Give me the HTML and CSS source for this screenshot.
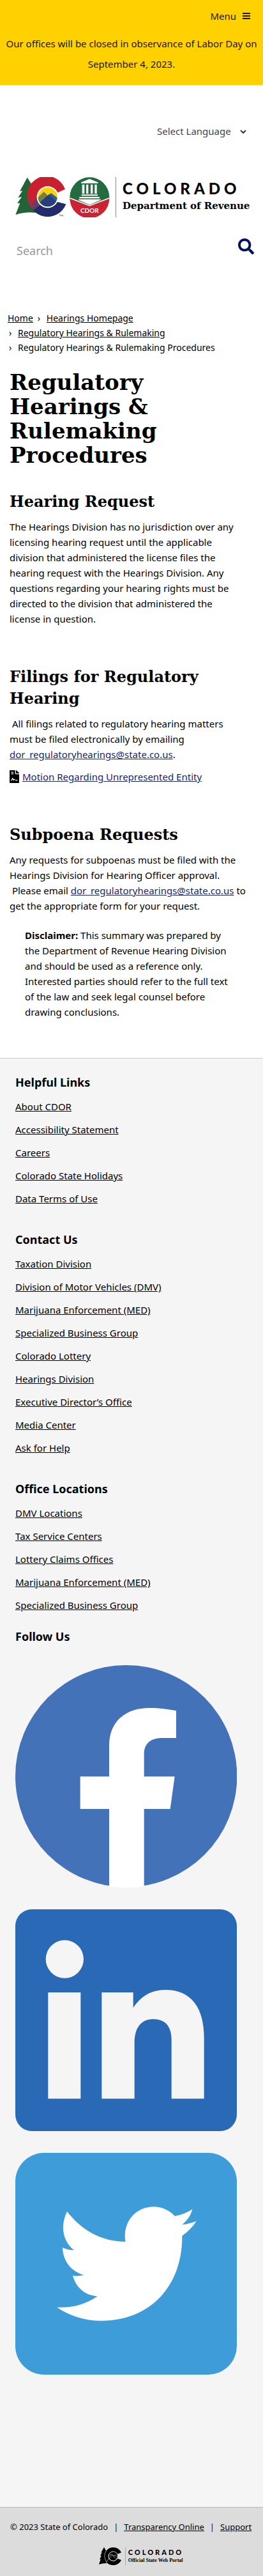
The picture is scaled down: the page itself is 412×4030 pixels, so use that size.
FILE: index.html
```html
<!DOCTYPE html>
<html lang="en">
<head>
<meta charset="utf-8">
<meta name="viewport" content="width=device-width, initial-scale=1">
<title>Regulatory Hearings &amp; Rulemaking Procedures</title>
<link rel="stylesheet" href="styles.css">
</head>
<body>
<div class="alert">
  <button class="menu" type="button">Menu
    <svg width="12" height="12" viewBox="0 0 12 12" aria-hidden="true"><path d="M0 2H12M0 6H12M0 10H12" stroke="currentColor" stroke-width="2"/></svg>
  </button>
  <p class="notice">Our offices will be closed in observance of Labor Day on September 4, 2023.</p>
</div>

<header class="header">
  <div class="language">
    <select class="language-select" aria-label="Select Language"><option>Select Language</option></select>
    <svg class="language-arrow" width="10" height="6" viewBox="0 0 10 6" aria-hidden="true"><path d="M1 1L5 5L9 1" fill="none" stroke="#333" stroke-width="2"/></svg>
  </div>

  <a class="brand" href="#" aria-label="Colorado Department of Revenue">
    <svg class="brand-mark" width="148" height="63" viewBox="74 111 444 189" aria-hidden="true">
      <path d="M130 113L152 147L144 149L166 184L158 187L196 284Q135 268 75 288L96 233L83 234L104 204L87 207L108 175L95 178Z" fill="#236338"/>
      <path d="M308 168A92 92 0 1 0 145 250L186 234A50 50 0 1 1 273 184Z" fill="#c9202f"/>
      <path d="M312 238A92 92 0 0 1 158 267L190 239A50 50 0 0 0 270 227Z" fill="#232b6b"/>
      <path d="M134 205Q140 238 158 267L190 239L178 205L157 235Z" fill="#6c3c64"/>
      <path d="M157 235L134 212Q138 240 150 257Z" fill="#a12e4b"/>
      <circle cx="226" cy="205" r="51" fill="#fff"/>
      <circle cx="226" cy="205" r="45" fill="#fed103"/>
      <path d="M181 207L208 181L226 199L242 186L271 208A45 45 0 0 1 182 214Z" fill="#345d91"/>
      <path d="M181 207L208 181L224 198L190 229Q181 219 181 207Z" fill="#788139"/>
      <path d="M190 230L232 192L266 226A45 45 0 0 1 190 230Z" fill="#27407b"/>
      <path d="M280 288H288M284 288V295M291 295V289L294 293L297 289V295" fill="none" stroke="#555" stroke-width="2"/>
      <circle cx="423" cy="205" r="93" fill="#246b40"/>
      <path d="M330 211L423 247L516 211A93 93 0 0 1 330 211Z" fill="#cd2233"/>
      <path d="M331 210L423 245L515 210" fill="none" stroke="#fff" stroke-width="5"/>
      <path d="M383 140V136L423 120L463 136V140ZM388 146H399V189H388ZM407 146H417V189H407ZM428 146H438V189H428ZM447 146H457V189H447ZM385 193H461V199H385ZM375 204H470V211H375ZM371 215H475V219L423 241L371 219Z" fill="#fff"/>
      <text x="423" y="280" class="brand-seal">CDOR</text>
    </svg>
    <span class="brand-text">
      <span class="brand-name">COLORADO</span>
      <span class="brand-dept">Department of Revenue</span>
    </span>
  </a>

  <form class="search">
    <input class="search-input" type="search" placeholder="Search" aria-label="Search">
    <button class="search-button" type="submit" aria-label="Submit search">
      <svg width="25" height="25" viewBox="0 0 512 512" aria-hidden="true"><path fill="#02135b" d="M505 442.700L405.300 343c-4.500-4.500-10.600-7-17-7H372c27.600-35.300 44-79.700 44-128C416 93.100 322.900 0 208 0S0 93.100 0 208s93.100 208 208 208c48.300 0 92.700-16.400 128-44v16.300c0 6.400 2.500 12.500 7 17l99.700 99.700c9.400 9.400 24.600 9.400 33.900 0l28.300-28.300c9.400-9.400 9.400-24.600.1-34zM208 336c-70.700 0-128-57.200-128-128 0-70.700 57.200-128 128-128 70.700 0 128 57.200 128 128 0 70.700-57.200 128-128 128z"/></svg>
    </button>
  </form>
</header>

<nav aria-label="Breadcrumb">
  <ol class="breadcrumb">
    <li><a href="#">Home</a></li>
    <li><a href="#">Hearings Homepage</a></li>
    <li><a href="#">Regulatory Hearings &amp; Rulemaking</a></li>
    <li>Regulatory Hearings &amp; Rulemaking Procedures</li>
  </ol>
</nav>

<main class="content">
  <h1>Regulatory Hearings &amp; Rulemaking Procedures</h1>

  <section class="narrow">
    <h2>Hearing Request</h2>
    <p>The Hearings Division has no jurisdiction over any licensing hearing request until the applicable division that administered the license files the hearing request with the Hearings Division. Any questions regarding your hearing rights must be directed to the division that administered the license in question.</p>
  </section>

  <section class="narrow">
    <h2>Filings for Regulatory Hearing</h2>
    <p>&nbsp;All filings related to regulatory hearing matters must be filed electronically by emailing <a href="#">dor_regulatoryhearings@state.co.us</a>.</p>
    <p class="document">
      <svg width="15" height="20" viewBox="0 0 384 512" aria-hidden="true"><path d="M224 136V0H24C10.700 0 0 10.700 0 24v464c0 13.300 10.700 24 24 24h336c13.300 0 24-10.700 24-24V160H248c-13.200 0-24-10.800-24-24zM64 72c0-4.420 3.580-8 8-8h80c4.420 0 8 3.580 8 8v16c0 4.420-3.580 8-8 8H72c-4.420 0-8-3.580-8-8V72zm0 64c0-4.420 3.580-8 8-8h80c4.420 0 8 3.580 8 8v16c0 4.420-3.580 8-8 8H72c-4.420 0-8-3.580-8-8v-16zm192.810 248H304c8.840 0 16 7.160 16 16s-7.160 16-16 16h-47.190c-16.450 0-31.800-9.140-39.140-23.880-4.890-9.760-15.480-11.020-18.480-11.020-3 0-13.660 1.260-18.560 11.040l-7.390 14.800c-2.890 5.780-8.840 9.190-15.170 8.790-6.450-.45-12-4.750-14.030-10.890L120.200 354.600l-10.610 31.880c-5.890 17.660-22.380 29.530-41 29.530H64c-8.840 0-16-7.160-16-16s7.160-16 16-16h4.590c4.830 0 9.110-3.080 10.640-7.660l18.190-54.640c3.300-9.810 12.440-16.410 22.780-16.410s19.480 6.590 22.770 16.410l13.880 41.640c19.770-16.190 54.050-9.700 66 14.160 2.020 4.040 5.940 6.500 10.970 6.500zM377 105L279.100 7c-4.500-4.500-10.600-7-17-7H256v128h128v-6.100c0-6.300-2.500-12.400-7-16.900z"/></svg>
      <a href="#">Motion Regarding Unrepresented Entity</a>
    </p>
  </section>

  <section>
    <h2>Subpoena Requests</h2>
    <p>Any requests for subpoenas must be filed with the Hearings Division for Hearing Officer approval. &nbsp;Please&nbsp;email <a href="#">dor_regulatoryhearings@state.co.us</a> to get the appropriate form for your request.</p>
    <blockquote class="disclaimer"><strong>Disclaimer:</strong> This summary was prepared by the Department of Revenue Hearing Division and should be used as a reference only. Interested parties should refer to the full text of the law and seek legal counsel before drawing conclusions.</blockquote>
  </section>
</main>

<footer>
  <div class="footer-main">
    <section class="footer-group">
      <h3>Helpful Links</h3>
      <ul>
        <li><a href="#">About CDOR</a></li>
        <li><a href="#">Accessibility Statement</a></li>
        <li><a href="#">Careers</a></li>
        <li><a href="#">Colorado State Holidays</a></li>
        <li><a href="#">Data Terms of Use</a></li>
      </ul>
    </section>
    <section class="footer-group">
      <h3>Contact Us</h3>
      <ul>
        <li><a href="#">Taxation Division</a></li>
        <li><a href="#">Division of Motor Vehicles (DMV)</a></li>
        <li><a href="#">Marijuana Enforcement (MED)</a></li>
        <li><a href="#">Specialized Business Group</a></li>
        <li><a href="#">Colorado Lottery</a></li>
        <li><a href="#">Hearings Division</a></li>
        <li><a href="#">Executive Director’s Office</a></li>
        <li><a href="#">Media Center</a></li>
        <li><a href="#">Ask for Help</a></li>
      </ul>
    </section>
    <section class="footer-group">
      <h3>Office Locations</h3>
      <ul>
        <li><a href="#">DMV Locations</a></li>
        <li><a href="#">Tax Service Centers</a></li>
        <li><a href="#">Lottery Claims Offices</a></li>
        <li><a href="#">Marijuana Enforcement (MED)</a></li>
        <li><a href="#">Specialized Business Group</a></li>
      </ul>
    </section>
    <section class="follow">
      <h3>Follow Us</h3>
      <div class="social">
        <a href="#" aria-label="Facebook">
          <svg viewBox="75 71 1041 1044" aria-hidden="true">
            <circle cx="596" cy="592" r="521" fill="#4472b9"/>
            <path d="M380 594H516V450C516 332 596 272 706 272C750 272 790 278 831 285V413H765C710 413 680 440 680 490V594H824L803 746H680V1108Q598 1123 516 1108V746H380Z" fill="#fff"/>
          </svg>
        </a>
        <a href="#" aria-label="LinkedIn">
          <svg viewBox="75 78 1041 1041" aria-hidden="true">
            <rect x="75" y="78" width="1041" height="1041" rx="78" fill="#2969b6"/>
            <g fill="#f5f5f5">
              <circle cx="307" cy="312" r="89"/>
              <path d="M229 468H382V967H229Z"/>
              <path d="M481 468H629V540Q685 456 780 456C905 456 962 545 962 680V967H809V690C809 625 778 593 723 593C665 593 635 635 635 705V967H481Z"/>
            </g>
          </svg>
        </a>
        <a href="#" aria-label="Twitter">
          <svg viewBox="76 55 1041 1041" aria-hidden="true">
            <rect x="76" y="55" width="1041" height="1041" rx="135" fill="#3e9cd8"/>
            <path d="M319 330C390 420 480 470 593 472C580 380 640 308 727 308C765 308 800 325 826 352C855 347 882 336 908 320C900 350 885 372 860 392C883 390 905 383 927 375C910 402 888 425 860 444C862 680 710 843 480 843C405 843 335 822 272 780C340 784 405 768 462 728C405 724 362 690 346 632C363 634 380 633 398 629C340 612 300 565 298 500C315 508 333 512 352 512C300 470 285 400 319 330Z" fill="#fff"/>
          </svg>
        </a>
      </div>
    </section>
  </div>

  <div class="footer-bar">
    <p class="legal"><span>© 2023 State of Colorado</span><span>|</span><a href="#">Transparency Online</a><span>|</span><a href="#">Support</a></p>
    <a class="portal" href="#" aria-label="Colorado Official State Web Portal">
      <svg width="36" height="28" viewBox="0 0 108 84" aria-hidden="true">
        <path d="M24 0L34 18L31 20L42 38L38 40L50 76Q25 72 0 80L8 56L3 56L12 40L6 41L14 24L10 25Z"/>
        <path d="M105 25A42 42 0 1 0 105 60L87 53A23 23 0 1 1 87 32Z"/>
        <circle cx="67" cy="42" r="21"/>
        <g fill="none" stroke="#dcdcdc" stroke-width="2">
          <circle cx="67" cy="42" r="22"/>
          <path d="M34 16Q16 44 40 76M32 72L62 36L86 58M48 40L59 32L68 42L75 36L88 46"/>
        </g>
      </svg>
      <span class="portal-text">
        <span class="portal-name">COLORADO</span>
        <span class="portal-sub">Official State Web Portal</span>
      </span>
    </a>
  </div>
</footer>
</body>
</html>
```

FILE: styles.css
```css
* { box-sizing: border-box; }

body {
  margin: 0;
  background: #fff;
  color: #000;
  font: 15px/24px "Noto Sans", "Open Sans", sans-serif;
}

h1, h2, h3, p, ul, ol { margin: 0; }
ul, ol { padding: 0; list-style: none; }
a { color: #000; }
svg { display: block; flex: none; }

.alert {
  padding: 13px 0 17px;
  background: #ffd100;
  color: #1c1400;
}
.menu {
  display: flex;
  align-items: center;
  gap: 10px;
  margin: 0 20px 15px auto;
  padding: 0;
  border: 0;
  background: none;
  color: inherit;
  font: inherit;
}
.notice { line-height: 32px; text-align: center; }

.header { padding: 60px 14px 0 24px; }
.language {
  position: relative;
  width: 140px;
  margin: 0 12px 0 auto;
}
.language-select {
  width: 100%;
  height: 24px;
  padding: 0;
  border: 0;
  appearance: none;
  background: none;
  color: #444;
  font: inherit;
}
.language-arrow {
  position: absolute;
  top: 10px;
  right: 0;
}

.brand {
  display: flex;
  gap: 9px;
  margin-top: 60px;
  text-decoration: none;
}
.brand-seal {
  fill: #fff;
  font: bold 30px Lato, sans-serif;
  text-anchor: middle;
}
.brand-text {
  display: flex;
  flex-direction: column;
  gap: 4px;
  padding: 5px 0 0 10px;
  border-left: 1px solid #888;
}
.brand-name {
  font: 900 24px/26px Lato, sans-serif;
  letter-spacing: 6px;
}
.brand-dept {
  font: bold 15px/20px "DejaVu Serif", serif;
  white-space: nowrap;
}

.search {
  display: flex;
  align-items: flex-start;
  margin-top: 33px;
}
.search-input {
  flex: 1;
  min-width: 0;
  height: 38px;
  padding: 0 2px;
  border: 0;
  background: none;
  font: inherit;
  font-size: 18px;
}
.search-input::placeholder { color: #999; }
.search-button {
  padding: 0;
  border: 0;
  background: none;
}

.breadcrumb {
  display: flex;
  flex-wrap: wrap;
  column-gap: 5px;
  padding: 75px 12px 0;
  font-size: 14px;
  line-height: 23px;
}
.breadcrumb li + li::before {
  content: "›";
  display: inline-block;
  width: 14px;
  padding-left: 2px;
}

.content { padding: 24px 15px 60px; }
h1 {
  font: bold 34px/38px "DejaVu Serif", serif;
}
h2 {
  margin: 62px 0 10px;
  font: bold 24px/34px "DejaVu Serif", serif;
}
h1 + section h2 { margin-top: 37px; }
.narrow { padding-right: 22px; }
.content a { color: #1a2470; }
.document {
  display: flex;
  align-items: center;
  gap: 5px;
  margin-top: 11px;
}
.disclaimer { margin: 22px 34px 0 24px; }

.footer-main {
  padding: 19px 41px 207px 24px;
  border-top: 1px solid #ccc;
  background: #f5f5f5;
}
.footer-group + .footer-group { margin-top: 28px; }
h3 {
  margin-bottom: 2px;
  font-size: 18px;
  line-height: 36px;
}
.footer-group li { line-height: 36px; }
.follow { margin-top: 13px; }
.social {
  display: flex;
  flex-direction: column;
  gap: 34px;
  margin-top: 27px;
}
.social svg { width: 100%; }

.footer-bar {
  padding: 18px 16px;
  border-top: 1px solid #bbb;
  background: #dcdcdc;
}
.legal {
  display: flex;
  flex-wrap: wrap;
  column-gap: 9px;
  font-size: 13px;
}
.portal {
  display: flex;
  justify-content: center;
  gap: 5px;
  margin: 20px 0 0 30px;
  text-decoration: none;
}
.portal-text {
  display: flex;
  flex-direction: column;
  padding: 1px 0 0 4px;
  border-left: 1px solid #aaa;
}
.portal-name {
  font: 900 11px/14px Lato, sans-serif;
  letter-spacing: 3px;
}
.portal-sub {
  font: bold 8px/12px "Liberation Serif", serif;
}
```
